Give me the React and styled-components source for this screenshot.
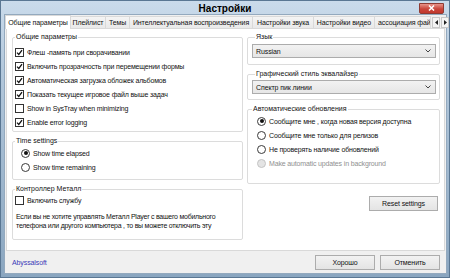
import React from "react";
import styled, { createGlobalStyle } from "styled-components";

const Global = createGlobalStyle`
  html, body { margin: 0; padding: 0; background: #fff; }
  * { box-sizing: border-box; }
  body { font-family: "Liberation Sans", Arial, sans-serif; font-size: 7px; letter-spacing: -0.1px; color: #111; }
`;

const Window = styled.div`
  width: 450px;
  height: 278px;
  display: flex;
  flex-direction: column;
  background: linear-gradient(#cadbeb, #b3c8dc 25%, #8aa6c0);
  border: 1px solid #5a7793;
`;

const TitleBar = styled.div`
  height: 13px;
  display: grid;
  grid-template-columns: 1fr auto 1fr;
  align-items: center;
  padding: 0 3px;
`;

const Title = styled.div`
  grid-column: 2;
  font-size: 10px;
  font-weight: bold;
  letter-spacing: 0;
  color: #000;
  padding-top: 2px;
`;

const CloseBtn = styled.div`
  grid-column: 3;
  justify-self: end;
  width: 25px;
  height: 11px;
  margin-top: 1px;
  margin-right: 2px;
  background: linear-gradient(#e8948a, #c9453a 55%, #c2382d);
  border: 1px solid #8f3b33;
  border-radius: 0 0 2px 2px;
  display: flex;
  align-items: center;
  justify-content: center;
`;

const Client = styled.div`
  flex: 1;
  margin: 0 2px 3px 3px;
  background: #f0f0f0;
  display: flex;
  flex-direction: column;
  border: 1px solid #93a9be;
`;

const TabStrip = styled.div`
  height: 14px;
  display: flex;
  align-items: flex-end;
`;

const Tab = styled.div`
  height: ${p => (p.$active ? "14px" : "13px")};
  padding: 0 ${p => (p.$active ? "4px" : "3px")};
  border: 1px solid #d9d9d9;
  border-bottom: ${p => (p.$active ? "none" : "1px solid #d9d9d9")};
  margin-left: ${p => (p.$first ? "0" : "-1px")};
  background: ${p => (p.$active ? "#fff" : "linear-gradient(#f4f4f4, #e9e9e9)")};
  display: flex;
  align-items: center;
  justify-content: ${p => (p.$clip ? "flex-start" : "center")};
  white-space: nowrap;
  overflow: hidden;
  width: ${p => p.$w}px;
  flex: none;
  position: relative;
  z-index: ${p => (p.$active ? 1 : 0)};
`;

const Arrows = styled.div`
  display: flex;
  gap: 1px;
  margin-left: 1px;
  margin-bottom: 1px;
`;

const Arrow = styled.div`
  width: 8px;
  height: 11px;
  border: 1px solid #c8c8c8;
  background: #f4f4f4;
  display: flex;
  align-items: center;
  justify-content: center;
`;

const Panel = styled.div`
  flex: 1;
  background: #fff;
  border: 1px solid #d9d9d9;
  margin: -1px 1px 0 1px;
  display: grid;
  grid-template-columns: 231px 1fr;
  column-gap: 4px;
  padding: 3px 4px 0 5px;
  align-items: start;
`;

const Column = styled.div`
  display: flex;
  flex-direction: column;
  gap: 4px;
`;

const Group = styled.fieldset`
  margin: 0;
  border: 1px solid #dcdcdc;
  border-radius: 2px;
  padding: ${p => p.$pad || "3px 4px 2px 1px"};
  min-width: 0;
`;

const Legend = styled.legend`
  padding: 0 1px;
  margin-left: ${p => p.$ml ?? 1}px;
  line-height: 10px;
  font-size: 7px;
  letter-spacing: 0;
`;

const Row = styled.div`
  height: ${p => p.$h || 14}px;
  display: flex;
  align-items: center;
  gap: 3px;
  padding-left: ${p => p.$indent || 0}px;
  color: ${p => (p.$disabled ? "#909090" : "#111")};
  letter-spacing: -0.15px;
  white-space: nowrap;
`;

const Box = styled.span`
  width: 9px;
  height: 9px;
  border: 1px solid #333;
  background: #fff;
  display: inline-flex;
  align-items: center;
  justify-content: center;
  flex: none;
`;

const Radio = styled.span`
  width: 9px;
  height: 9px;
  border-radius: 50%;
  border: 1px solid ${p => (p.$disabled ? "#c4c4c4" : "#3a3a3a")};
  background: ${p => (p.$disabled ? "#e4e4e4" : "#fff")};
  display: inline-flex;
  align-items: center;
  justify-content: center;
  flex: none;
  &::after {
    content: "";
    width: 4px;
    height: 4px;
    border-radius: 50%;
    background: #111;
    display: ${p => (p.$on ? "block" : "none")};
  }
`;

const Combo = styled.div`
  height: 14px;
  border: 1px solid #acacac;
  background: linear-gradient(#f2f2f2, #e6e6e6);
  display: flex;
  align-items: center;
  justify-content: space-between;
  padding: 0 4px 0 3px;
`;

const Chevron = styled.svg`
  width: 6px;
  height: 4px;
`;

const Para = styled.div`
  line-height: 9px;
  padding: 5px 0 0 2px;
  letter-spacing: -0.25px;
  white-space: nowrap;
`;

const Button = styled.div`
  width: ${p => p.$w || 60}px;
  height: 15px;
  border: 1px solid #acacac;
  background: linear-gradient(#f2f2f2, #e4e4e4);
  display: flex;
  align-items: center;
  justify-content: center;
  align-self: ${p => p.$self || "auto"};
  margin: ${p => p.$m || "0"};
`;

const Footer = styled.div`
  height: 22px;
  display: flex;
  align-items: center;
  padding: 0 6px 0 7px;
  gap: 5px;
`;

const Link = styled.span`
  color: #3b3bb8;
  flex: 1;
`;

const Check = ({ on }) => (
  <Box>
    {on && (
      <svg width="7" height="7" viewBox="0 0 7 7">
        <path d="M1 3.6 L2.8 5.4 L6 1.2" stroke="#111" strokeWidth="1.3" fill="none" />
      </svg>
    )}
  </Box>
);

const CheckRow = ({ on, children, h }) => (
  <Row $h={h} $indent={1}>
    <Check on={on} />
    <span>{children}</span>
  </Row>
);

const RadioRow = ({ on, disabled, children, indent = 7 }) => (
  <Row $indent={indent} $disabled={disabled}>
    <Radio $on={on} $disabled={disabled} />
    <span>{children}</span>
  </Row>
);

const Dropdown = ({ children }) => (
  <Combo>
    <span>{children}</span>
    <Chevron viewBox="0 0 6 4">
      <path d="M0.5 0.5 L3 3 L5.5 0.5" stroke="#444" strokeWidth="1" fill="none" />
    </Chevron>
  </Combo>
);

const tabs = [
  ["Общие параметры", 66],
  ["Плейлист", 36],
  ["Темы", 25],
  ["Интеллектуальная воспроизведения", 124],
  ["Настройки звука", 62],
  ["Настройки видео", 62],
  ["ассоциация файлов", 57, true],
];

export default function App() {
  return (
    <>
      <Global />
      <Window>
        <TitleBar>
          <Title>Настройки</Title>
          <CloseBtn>
            <svg width="7" height="6" viewBox="0 0 7 6">
              <path d="M1 0.5 L6 5.5 M6 0.5 L1 5.5" stroke="#fff" strokeWidth="1.5" />
            </svg>
          </CloseBtn>
        </TitleBar>
        <Client>
          <TabStrip>
            {tabs.map(([t, w, clip], i) => (
              <Tab key={t} $active={i === 0} $first={i === 0} $w={w} $clip={clip}>
                {t}
              </Tab>
            ))}
            <Arrows>
              <Arrow>
                <svg width="3" height="5" viewBox="0 0 3 5"><path d="M3 0 L0 2.5 L3 5 Z" fill="#222" /></svg>
              </Arrow>
              <Arrow>
                <svg width="3" height="5" viewBox="0 0 3 5"><path d="M0 0 L3 2.5 L0 5 Z" fill="#222" /></svg>
              </Arrow>
            </Arrows>
          </TabStrip>
          <Panel>
            <Column>
              <Group>
                <Legend>Общие параметры</Legend>
                <CheckRow on>Флеш -память при сворачивании</CheckRow>
                <CheckRow on>Включить прозрачность при перемещении формы</CheckRow>
                <CheckRow on>Автоматическая загрузка обложек альбомов</CheckRow>
                <CheckRow on>Показать текущее игровое файл выше задач</CheckRow>
                <CheckRow>Show in SysTray when minimizing</CheckRow>
                <CheckRow on>Enable error logging</CheckRow>
              </Group>
              <Group $pad="0 4px 5px 1px">
                <Legend>Time settings</Legend>
                <RadioRow on>Show time elapsed</RadioRow>
                <RadioRow>Show time remaining</RadioRow>
              </Group>
              <Group $pad="0 4px 9px 1px">
                <Legend>Контроллер Металл</Legend>
                <CheckRow h={13}>Включить службу</CheckRow>
                <Para>
                  Если вы не хотите управлять Металл Player с вашего мобильного
                  <br />
                  телефона или другого компьютера , то вы можете отключить эту
                </Para>
              </Group>
            </Column>
            <Column>
              <Group $pad="2px 3px 6px 4px">
                <Legend $ml={3}>Язык</Legend>
                <Dropdown>Russian</Dropdown>
              </Group>
              <Group $pad="1px 3px 5px 4px">
                <Legend $ml={3}>Графический стиль эквалайзер</Legend>
                <Dropdown>Спектр пик линии</Dropdown>
              </Group>
              <Group $pad="0 4px 13px 1px">
                <Legend $ml={3}>Автоматические обновления</Legend>
                <RadioRow on indent={8}>Сообщите мне , когда новая версия доступна</RadioRow>
                <RadioRow indent={8}>Сообщите мне только для релизов</RadioRow>
                <RadioRow indent={8}>Не проверять наличие обновлений</RadioRow>
                <RadioRow disabled indent={8}>Make automatic updates in background</RadioRow>
              </Group>
              <Button $w={69} $self="flex-end" $m="8px 2px 0 0">Reset settings</Button>
            </Column>
          </Panel>
          <Footer>
            <Link>Abyssalsoft</Link>
            <Button $w={60}>Хорошо</Button>
            <Button $w={60}>Отменить</Button>
          </Footer>
        </Client>
      </Window>
    </>
  );
}
